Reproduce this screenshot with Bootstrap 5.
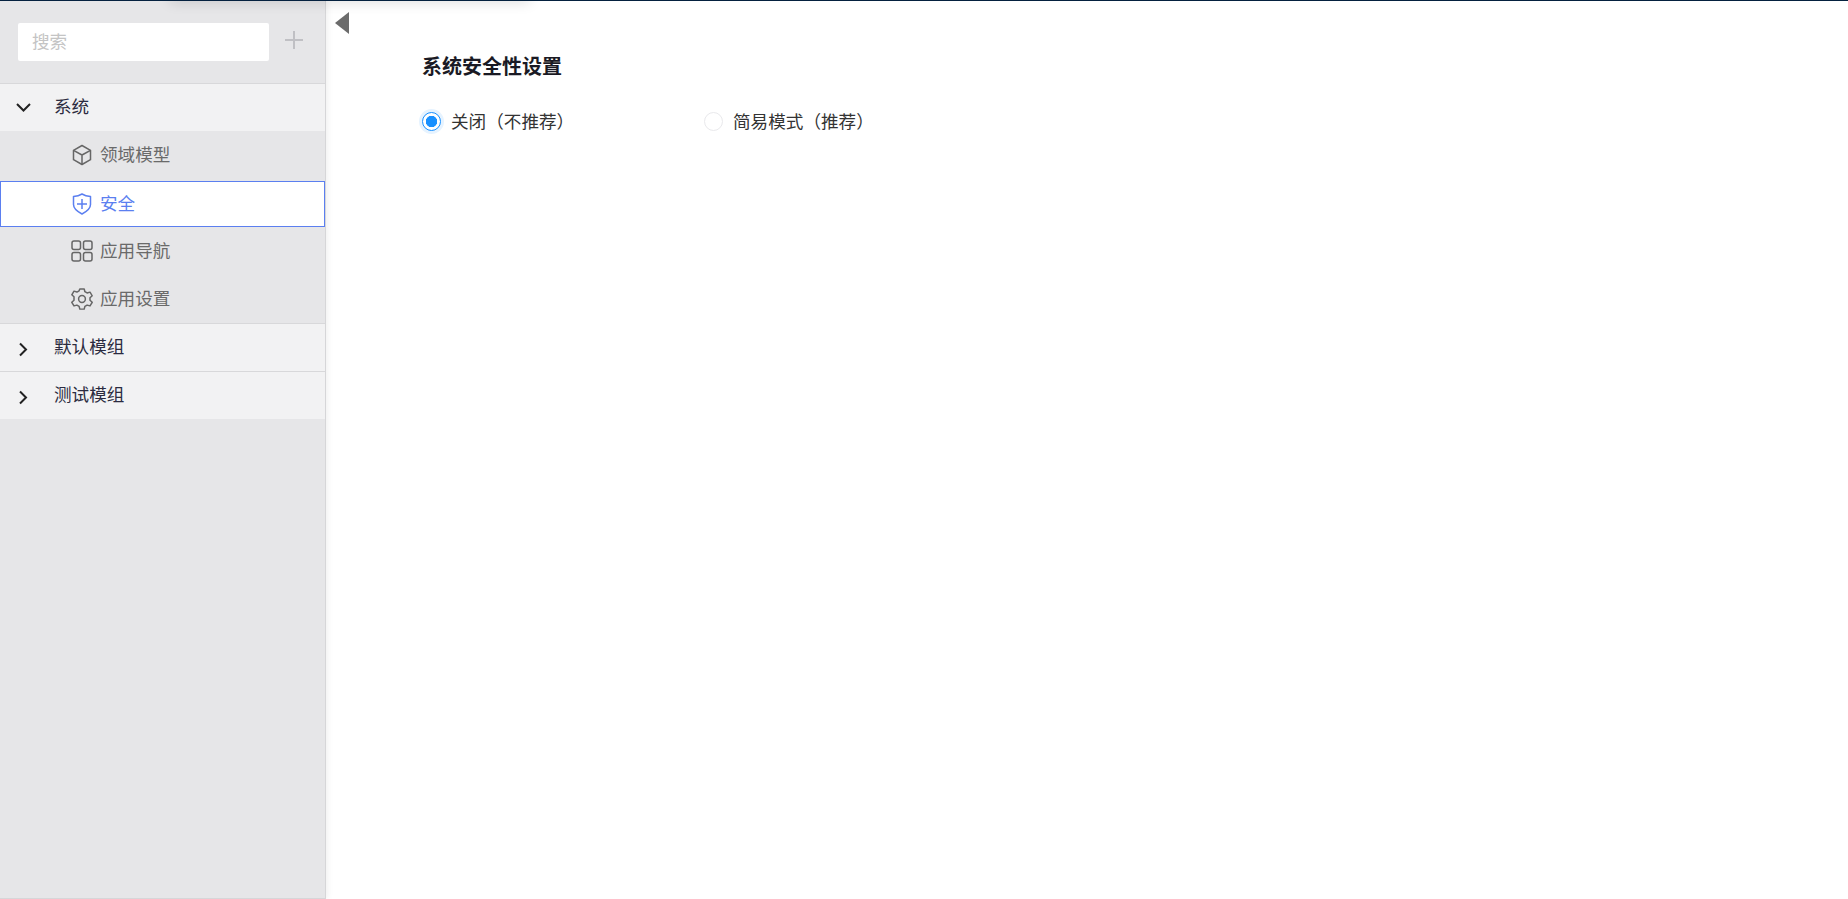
<!DOCTYPE html>
<html lang="zh-CN">
<head>
  <meta charset="UTF-8">
  <title>系统安全性设置</title>
  <meta name="viewport" content="width=device-width, initial-scale=1">
  <link href="https://cdn.jsdelivr.net/npm/bootstrap@5.3.3/dist/css/bootstrap.min.css" rel="stylesheet">
  <style>
    html, body { height: 100%; overflow: hidden; }
    body { font-family: "Noto Sans CJK SC", "Liberation Sans", sans-serif; background: #fff; }
    .top-line { height: 1px; background: #04213f; flex: none; position: relative; z-index: 3; }
    .page-wrap { height: 100vh; }
    .top-glow { position: absolute; top: -12px; left: 170px; width: 360px; height: 12px; box-shadow: 0 2px 14px rgba(0,0,0,.14); z-index: 2; }
    .side-pane { width: 326px; flex: none; background: #e6e6e8; border-right: 1px solid #d6d6d8; border-bottom: 1px solid #d6d6d8; box-shadow: 2px 0 6px rgba(0,0,0,.06); }
    .search-row { height: 82px; padding: 22px 0 0 18px; }
    .search-box.form-control { width: 251px; height: 38px; border: 0; border-radius: 2px; padding: 0 14px 4px; font-size: 17.6px; background: #fff; box-shadow: none; }
    .search-box::placeholder { color: #c4c4c4; }
    .add-btn { margin-left: 16px; width: 18px; height: 18px; display: block; }
    .tree-head.list-group-item { height: 48px; background: #f2f2f3; border: 0; border-top: 1px solid #d8d8da; border-radius: 0; padding: 0; color: #2b2b40; font-size: 17.6px; display: flex; align-items: center; }
    .tree-arrow { width: 54px; flex: none; padding-left: 16px; display: flex; }
    .arrow-right { margin-top: 3px; }
    .tree-txt { margin-bottom: 3px; }
    .tree-item.list-group-item { height: 48px; background: transparent; border: 0; border-radius: 0; padding: 0 0 0 71px; color: #6a6a6a; font-size: 17.6px; display: flex; align-items: center; gap: 7px; }
    .tree-item .tree-txt { margin-bottom: 2px; }
    .tree-item svg { flex: none; }
    .tree-item.is-active { background: #fff; color: #5b7ff0; border: 1px solid #5b7ff0; padding-left: 70px; height: 46px; margin: 2px 0 0 0; }
    .collapse-tog { display: block; margin: 11px 0 0 9px; }
    .main-body { padding: 0 0 0 96px; margin-top: 18px; }
    .set-title { font-size: 20px; font-weight: 700; color: #1a1a24; line-height: 28px; margin: 0 0 28px; }
    .radio-row { gap: 0; }
    .radio-pick { width: 282px; font-size: 17.6px; color: #333; display: flex; align-items: center; gap: 10px; margin: 0; padding: 0; min-height: 0; }
    .radio-pick .form-check-input { width: 19px; height: 19px; margin: 0; float: none; flex: none; border: 1px solid #e9e9ec; background: #fff; background-image: none; }
    .radio-pick .form-check-input:checked { border-color: #1890ff; background: #fff radial-gradient(circle, #1890ff 0, #1890ff 5.4px, transparent 6px); box-shadow: 0 0 0 3px #e6f3ff; }
  </style>
</head>
<body>
  <div class="page-wrap d-flex flex-column position-relative">
    <div class="top-line"></div>
    <div class="top-glow"></div>
    <div class="d-flex flex-grow-1">
      <aside class="side-pane">
        <div class="search-row d-flex align-items-start">
          <input type="text" class="form-control search-box" placeholder="搜索">
          <svg class="add-btn mt-2" viewBox="0 0 18 18"><path d="M9 0v18M0 9h18" stroke="#c0c0c4" stroke-width="2" fill="none"/></svg>
        </div>
        <div class="list-group list-group-flush">
          <div class="list-group-item tree-head">
            <span class="tree-arrow"><svg width="15" height="15" viewBox="0 0 15 15"><path d="M1 4l6.500 6.500L14 4" stroke="#222" stroke-width="2" fill="none"/></svg></span><span class="tree-txt">系统</span>
          </div>
          <div class="list-group-item tree-item">
            <svg width="22" height="22" viewBox="0 0 22 22" fill="none" stroke="#666" stroke-width="1.500" stroke-linejoin="round"><path d="M11 1.500l8.500 4.800v9.400L11 20.500l-8.500-4.800V6.300z"/><path d="M2.500 6.300L11 11l8.500-4.700M11 11v9.500"/></svg>
            <span class="tree-txt">领域模型</span>
          </div>
          <div class="list-group-item tree-item is-active">
            <svg width="22" height="22" viewBox="0 0 22 22" fill="none" stroke="#5b7ff0" stroke-width="1.500" stroke-linejoin="round"><path d="M11 1c2.500 1.500 5.500 2.300 8.500 2.600v8c0 4-3.700 7-8.500 9.400-4.800-2.400-8.500-5.400-8.500-9.400v-8C5.500 3.300 8.500 2.500 11 1z"/><path d="M11 6v10M6 11h10"/></svg>
            <span class="tree-txt">安全</span>
          </div>
          <div class="list-group-item tree-item">
            <svg width="22" height="22" viewBox="0 0 22 22" fill="none" stroke="#666" stroke-width="1.500"><rect x="1" y="1" width="8.500" height="8.500" rx="2"/><rect x="12.500" y="1" width="8.500" height="8.500" rx="2"/><rect x="1" y="12.500" width="8.500" height="8.500" rx="2"/><rect x="12.500" y="12.500" width="8.500" height="8.500" rx="2"/></svg>
            <span class="tree-txt">应用导航</span>
          </div>
          <div class="list-group-item tree-item">
            <svg width="22" height="22" viewBox="0 0 22 22" fill="none" stroke="#666" stroke-width="1.500" stroke-linejoin="round"><path d="M8.800 1.500h4.400l.7 2.900 2.200 1.300 2.900-.9 2.200 3.800-2.200 2.100v2.600l2.200 2.100-2.200 3.800-2.900-.9-2.200 1.300-.7 2.900H8.800l-.7-2.900-2.200-1.300-2.900.9-2.200-3.800 2.200-2.100V9.700L.8 7.600 3 3.800l2.900.9 2.200-1.300z" transform="translate(0 -.5) scale(1 .96)"/><circle cx="11" cy="11" r="3.400"/></svg>
            <span class="tree-txt">应用设置</span>
          </div>
          <div class="list-group-item tree-head">
            <span class="tree-arrow"><svg class="arrow-right" width="15" height="15" viewBox="0 0 15 15"><path d="M4 1.500l6 6-6 6" stroke="#222" stroke-width="2" fill="none"/></svg></span><span class="tree-txt">默认模组</span>
          </div>
          <div class="list-group-item tree-head">
            <span class="tree-arrow"><svg class="arrow-right" width="15" height="15" viewBox="0 0 15 15"><path d="M4 1.500l6 6-6 6" stroke="#222" stroke-width="2" fill="none"/></svg></span><span class="tree-txt">测试模组</span>
          </div>
        </div>
      </aside>
      <main class="flex-grow-1">
        <svg class="collapse-tog" width="14" height="22" viewBox="0 0 14 22"><path d="M14 0v22L0 11z" fill="#6b6b6b"/></svg>
        <div class="main-body">
          <h1 class="set-title">系统安全性设置</h1>
          <div class="radio-row d-flex">
            <label class="form-check radio-pick"><input class="form-check-input" type="radio" name="secMode" checked>关闭（不推荐）</label>
            <label class="form-check radio-pick"><input class="form-check-input" type="radio" name="secMode">简易模式（推荐）</label>
          </div>
        </div>
      </main>
    </div>
  </div>
  <script src="https://cdn.jsdelivr.net/npm/bootstrap@5.3.3/dist/js/bootstrap.bundle.min.js"></script>
</body>
</html>
